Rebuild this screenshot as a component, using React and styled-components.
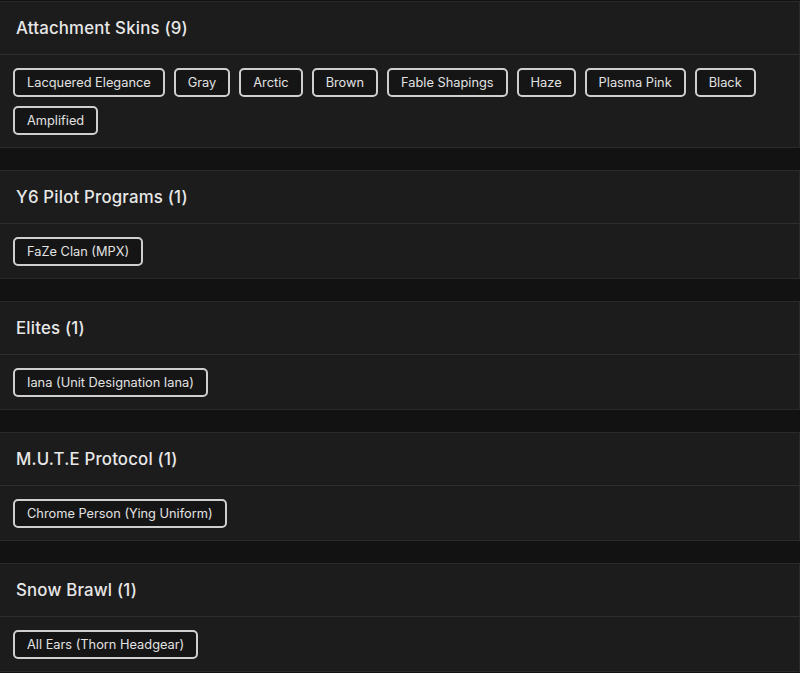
import React from 'react'
import styled, { createGlobalStyle } from 'styled-components'

const GlobalStyle = createGlobalStyle`
    html, body {
        margin: 0;
        padding: 0;
        background: #121212;
    }
    body {
        font-family: Inter, "Open Sans", sans-serif;
        color: #e6e6e6;
    }
`;

const Page = styled.div`
    display: flex;
    flex-direction: column;
    gap: 22px;
    width: 800px;
    padding-top: 1px;
`;

const Card = styled.section`
    background: #1c1c1c;
    border: 1px solid #2a2a2a;
    border-left: none;
    box-sizing: border-box;
`;

const CardHeader = styled.div`
    height: 53px;
    box-sizing: border-box;
    display: flex;
    align-items: center;
    padding: 0 16px;
    border-bottom: 1px solid #2e2e2e;
`;

const Title = styled.h3`
    margin: 0;
    font-size: 16.8px;
    font-weight: 500;
    color: #e8e8e8;
    letter-spacing: 0.2px;
`;

const CardBody = styled.div`
    display: flex;
    flex-wrap: wrap;
    gap: 9px 9px;
    padding: 13px 13px 12px;
`;

const Chip = styled.span`
    display: inline-flex;
    align-items: center;
    height: 29px;
    box-sizing: border-box;
    padding: 0 12px;
    border: 2px solid #cfcfcf;
    border-radius: 5px;
    background: #151515;
    font-size: 12.8px;
    color: #e2e2e2;
    white-space: nowrap;
`;

const groups = [
    {
        title: 'Attachment Skins',
        items: ['Lacquered Elegance', 'Gray', 'Arctic', 'Brown', 'Fable Shapings', 'Haze', 'Plasma Pink', 'Black', 'Amplified'],
    },
    { title: 'Y6 Pilot Programs', items: ['FaZe Clan (MPX)'] },
    { title: 'Elites', items: ['Iana (Unit Designation Iana)'] },
    { title: 'M.U.T.E Protocol', items: ['Chrome Person (Ying Uniform)'] },
    { title: 'Snow Brawl', items: ['All Ears (Thorn Headgear)'] },
]

const App = () => {
    return (
        <>
            <GlobalStyle />
            <Page>
                {groups.map((g) => (
                    <Card key={g.title}>
                        <CardHeader>
                            <Title>{g.title} ({g.items.length})</Title>
                        </CardHeader>
                        <CardBody>
                            {g.items.map((item) => (
                                <Chip key={item}>{item}</Chip>
                            ))}
                        </CardBody>
                    </Card>
                ))}
            </Page>
        </>
    )
}

export default App;
